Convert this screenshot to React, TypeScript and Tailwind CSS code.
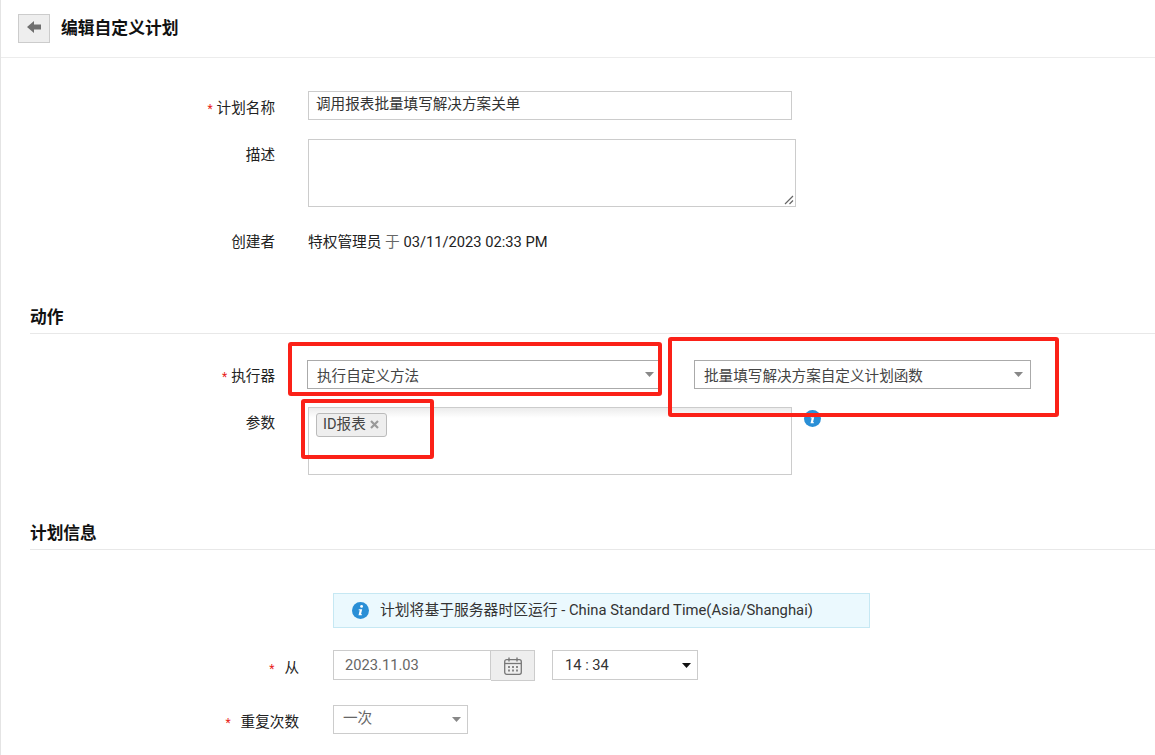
import type { ReactNode } from "react";

function Caret({ color = "#888" }: { color?: string }) {
  return (
    <svg width="9" height="5" viewBox="0 0 9 5" className="shrink-0">
      <path d="M0 0h9L4.5 5z" fill={color} />
    </svg>
  );
}

function InfoIcon({ size = 17 }: { size?: number }) {
  return (
    <svg width={size} height={size} viewBox="0 0 17 17">
      <circle cx="8.5" cy="8.5" r="8.5" fill="#2a8fd6" />
      <circle cx="9.6" cy="4.4" r="1.4" fill="#fff" />
      <path d="M6.8 7.2h3.4l-1.2 5h1.1l-.3 1.1H6.5l1.2-5H6.6z" fill="#fff" />
    </svg>
  );
}

function Row({ label, required, className, labelClass = "pt-[6px]", children }: { label: string; required?: boolean; className: string; labelClass?: string; children: ReactNode }) {
  return (
    <div className={`flex ${className}`}>
      <div className={`w-[275px] shrink-0 text-right text-[14.6px] leading-[20px] text-[#222] ${labelClass}`}>
        {required ? <span className="mr-[4px] text-[12px] text-[#e8211a]">*</span> : null}
        {label}
      </div>
      {children}
    </div>
  );
}

function SectionTitle({ title, className }: { title: string; className: string }) {
  return (
    <div className={`ml-[29px] border-b border-[#e8e8e8] pb-[3px] text-[16.7px] leading-[24px] font-bold text-[#111] ${className}`}>
      {title}
    </div>
  );
}

function ScheduleRow({ label, className, labelClass, children }: { label: string; className: string; labelClass: string; children: ReactNode }) {
  return (
    <div className={`flex ${className}`}>
      <div className={`w-[299px] shrink-0 text-right text-[14.6px] leading-[20px] text-[#222] ${labelClass}`}>
        <span className="mr-[10px] text-[12px] text-[#e8211a]">*</span>
        {label}
      </div>
      {children}
    </div>
  );
}

export default function App() {
  return (
    <main className="relative h-[755px] w-[1155px] overflow-hidden border-l border-[#e4e4e4] bg-white font-['Roboto','Noto_Sans_CJK_SC',sans-serif]">
      <header className="-ml-px flex h-[58px] items-start border-b border-[#ececec] pt-[14px] pl-[18px]">
        <button type="button" className="flex h-[29px] w-[32px] items-center justify-center border border-[#cccccc] bg-[#eeeeee] pb-[4px]">
          <svg width="15" height="12" viewBox="0 0 15 12">
            <path d="M0 6l7-6v3.5h7v5H7V12z" fill="#6f6f6f" />
          </svg>
        </button>
        <h1 className="ml-[11px] text-[16.8px] leading-[29px] font-bold text-[#111]">编辑自定义计划</h1>
      </header>

      <Row label="计划名称" required labelClass="pt-[7px]" className="mt-[33px] -ml-px">
        <div className="ml-[33px] flex h-[29px] w-[484px] items-center border border-[#cccccc] px-[7px] pb-[2px] text-[14.6px] text-[#333]">调用报表批量填写解决方案关单</div>
      </Row>

      <Row label="描述" className="mt-[19px] -ml-px">
        <div className="relative ml-[33px] h-[68px] w-[488px] border border-[#cccccc]">
          <svg width="10" height="10" viewBox="0 0 10 10" className="absolute right-[1px] bottom-[1px]">
            <path d="M1 9l8-8M5.5 9L9 5.5" stroke="#666" strokeWidth="1.2" />
          </svg>
        </div>
      </Row>

      <Row label="创建者" labelClass="pt-[1px]" className="mt-[24px] -ml-px">
        <div className="ml-[33px] pt-[1px] text-[14.7px] leading-[20px] text-[#222]">
          特权管理员 <span className="text-[#666]">于</span> 03/11/2023 02:33 PM
        </div>
      </Row>

      <SectionTitle title="动作" className="mt-[54px]" />

      <Row label="执行器" required labelClass="pt-[6px]" className="mt-[26px] -ml-px">
        <div className="relative z-10 ml-[32px] flex h-[29px] w-[354px] items-center justify-between border border-[#aaaaaa] bg-white pr-[6px] pl-[9px] text-[14.6px] text-[#444]">
          <span className="pt-[4px]">执行自定义方法</span>
          <Caret />
        </div>
        <div className="ml-[33px] flex h-[29px] w-[337px] items-center justify-between border border-[#aaaaaa] bg-white pr-[7px] pl-[9px] text-[14.6px] text-[#444]">
          <span className="pt-[4px]">批量填写解决方案自定义计划函数</span>
          <Caret />
        </div>
      </Row>

      <Row label="参数" className="mt-[18px] -ml-px">
        <div className="ml-[33px] h-[68px] w-[484px] border border-[#cccccc] bg-[linear-gradient(#ececec,#ffffff_10px)] pt-[4px] pl-[7px]">
          <span className="inline-flex h-[24px] items-center rounded-[3px] border border-[#bbbbbb] bg-[#eeeeee] pr-[7px] pl-[6px] text-[14.6px] text-[#444]">
            ID报表
            <svg width="9" height="9" viewBox="0 0 9 9" className="ml-[4px]">
              <path d="M1 1l7 7M8 1L1 8" stroke="#999" strokeWidth="2.2" />
            </svg>
          </span>
        </div>
        <div className="mt-[3px] ml-[12px]">
          <InfoIcon />
        </div>
      </Row>

      <SectionTitle title="计划信息" className="mt-[47px]" />

      <div className="mt-[43px] ml-[332px] flex h-[35px] w-[537px] items-center border border-[#c6e8f3] bg-[#ebf9fe] pl-[18px] text-[14.8px] text-[#333]">
        <InfoIcon />
        <span className="ml-[11px]">计划将基于服务器时区运行 - China Standard Time(Asia/Shanghai)</span>
      </div>

      <ScheduleRow label="从" labelClass="pt-[8px]" className="mt-[22px] -ml-px">
        <div className="ml-[34px] flex h-[30px] w-[158px] items-center border border-[#cccccc] pl-[11px] text-[14.7px] text-[#666]">2023.11.03</div>
        <div className="flex h-[31px] w-[44px] items-center justify-center border border-l-0 border-[#cccccc] bg-[#eeeeee]">
          <svg width="18" height="18" viewBox="0 0 18 18" fill="none">
            <rect x="0.7" y="2.7" width="16.6" height="14.6" rx="2" stroke="#777" strokeWidth="1.3" />
            <path d="M1 6.5h16" stroke="#777" strokeWidth="1.3" />
            <path d="M5 0.5v4M13 0.5v4" stroke="#777" strokeWidth="1.4" />
            <path d="M4 9h2v2H4zM8 9h2v2H8zM12 9h2v2h-2zM4 12.5h2v2H4zM8 12.5h2v2H8zM12 12.5h2v2h-2z" fill="#888" />
          </svg>
        </div>
        <div className="ml-[17px] flex h-[30px] w-[146px] items-center justify-between border border-[#cccccc] pr-[6px] pl-[12px] text-[14.7px] text-[#333]">
          14 : 34
          <Caret color="#111" />
        </div>
      </ScheduleRow>

      <ScheduleRow label="重复次数" labelClass="pt-[7px]" className="mt-[24px] -ml-px">
        <div className="ml-[34px] flex h-[29px] w-[135px] items-center justify-between border border-[#cccccc] pr-[6px] pl-[9px] text-[14.6px] text-[#666]">
          <span className="pb-[1px]">一次</span>
          <Caret />
        </div>
      </ScheduleRow>

      {/* red markup boxes drawn over the screenshot */}
      <div className="absolute top-[342px] left-[287px] z-20 h-[54px] w-[374px] rounded-[3px] border-[4px] border-[#fb2118]" />
      <div className="absolute top-[337px] left-[667px] z-20 h-[80px] w-[391px] rounded-[3px] border-[4px] border-[#fb2118]" />
      <div className="absolute top-[399px] left-[300px] z-20 h-[60px] w-[133px] rounded-[3px] border-[4px] border-[#fb2118]" />
    </main>
  );
}
